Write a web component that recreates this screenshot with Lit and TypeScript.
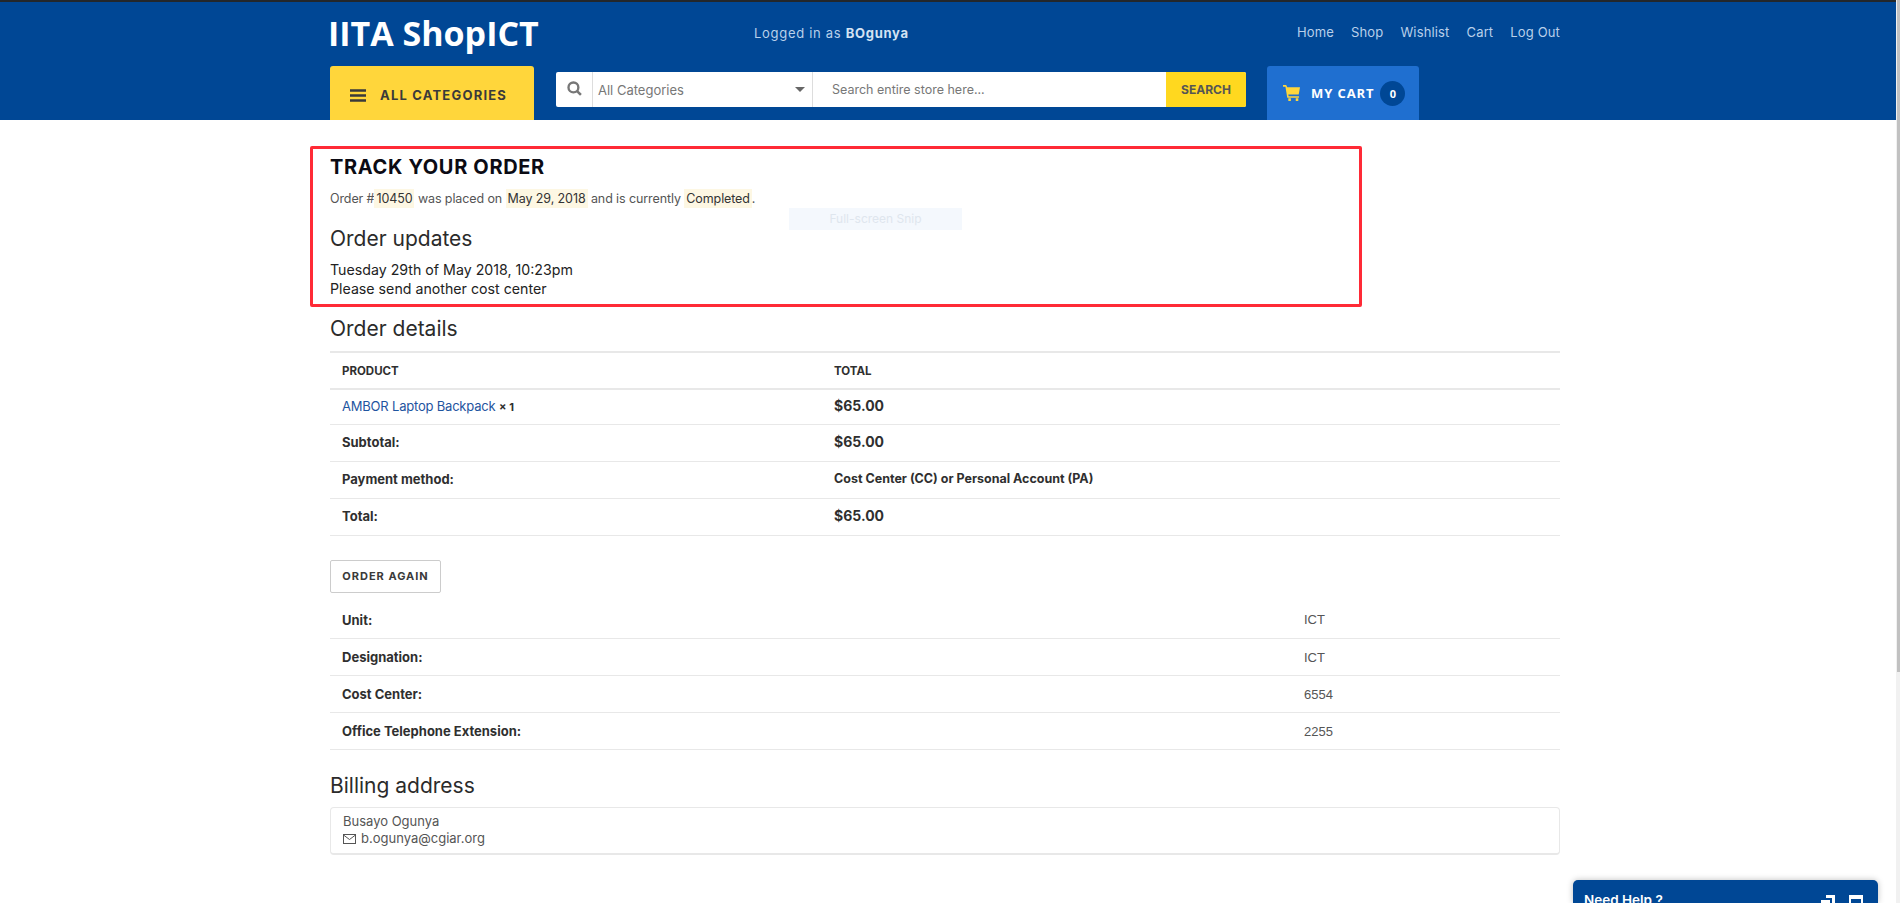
import { LitElement, css, html } from 'lit';
import { customElement } from 'lit/decorators.js';

const orderRows = [
  { label: 'Subtotal:', value: '$65.00', price: true },
  { label: 'Payment method:', value: 'Cost Center (CC) or Personal Account (PA)', price: false },
  { label: 'Total:', value: '$65.00', price: true },
];

const metaRows = [
  { label: 'Unit:', value: 'ICT' },
  { label: 'Designation:', value: 'ICT' },
  { label: 'Cost Center:', value: '6554' },
  { label: 'Office Telephone Extension:', value: '2255' },
];

@customElement('app-root')
export class AppRoot extends LitElement {
  static override styles = css`
    :host {
      display: block;
      position: relative;
      height: 903px;
      overflow: hidden;
      background: #fff;
      font-family: 'Inter', 'Liberation Sans', sans-serif;
      color: #333;
    }
    .scroll {
      position: absolute;
      top: 0;
      right: 0;
      bottom: 0;
      width: 4px;
      background: #f1f1f1;
    }
    .scroll::before {
      content: '';
      display: block;
      height: 672px;
      margin-left: 1px;
      background: #c1c1c1;
    }
    header {
      background: #004795;
      border-top: 2px solid #23272b;
      box-sizing: border-box;
      height: 120px;
    }
    .wrap {
      width: 1230px;
      margin-left: 330px;
    }
    .top {
      display: flex;
      align-items: center;
      height: 64px;
    }
    .logo {
      margin: -2px 0 0 -2px;
      font-family: 'Open Sans', sans-serif;
      font-weight: 700;
      font-size: 34px;
      color: #fff;
      width: 426px;
      line-height: 60px;
    }
    .logged {
      margin-top: -2px;
      font-size: 13px;
      letter-spacing: 0.7px;
      color: #b9d0ea;
    }
    .logged b {
      font-weight: 700;
      color: #d4e3f3;
    }
    .links {
      margin: -5px 0 0 auto;
      display: flex;
      gap: 17px;
      font-size: 13px;
      letter-spacing: 0.15px;
      color: #b9d0ea;
    }
    .bottom {
      display: flex;
      align-items: flex-start;
    }
    .cats {
      width: 204px;
      height: 54px;
      display: flex;
      align-items: center;
      gap: 14px;
      box-sizing: border-box;
      padding: 4px 0 0 20px;
      background: #ffd63b;
      border-radius: 3px 3px 0 0;
      color: #3a3a3a;
      font-size: 13px;
      font-weight: 700;
      letter-spacing: 1.2px;
    }
    .search {
      margin: 6px 0 0 22px;
      width: 690px;
      height: 35px;
      display: flex;
      background: #fff;
      border-radius: 2px;
      font-size: 13px;
      color: #777;
    }
    .search .mag {
      width: 37px;
      display: flex;
      align-items: center;
      justify-content: center;
      border-right: 1px solid #ddd;
      box-sizing: border-box;
      padding-bottom: 3px;
    }
    .search .sel {
      width: 220px;
      display: flex;
      align-items: center;
      justify-content: space-between;
      padding: 0 7px 0 5px;
      box-sizing: border-box;
      border-right: 1px solid #ddd;
    }
    .caret {
      width: 0;
      height: 0;
      border-left: 5px solid transparent;
      border-right: 5px solid transparent;
      border-top: 5px solid #666;
    }
    .search .input {
      flex: 1;
      display: flex;
      align-items: center;
      padding-left: 19px;
      font-size: 12.5px;
    }
    .search .btn {
      width: 80px;
      display: flex;
      align-items: center;
      justify-content: center;
      background: #ffd81f;
      border-radius: 0 2px 2px 0;
      color: #555;
      font-size: 12px;
      font-weight: 700;
    }
    .cart {
      margin-left: 21px;
      width: 152px;
      height: 54px;
      box-sizing: border-box;
      padding-left: 16px;
      display: flex;
      align-items: center;
      background: #1f6fd0;
      border-radius: 3px 3px 0 0;
      color: #fff;
      font-family: 'Open Sans', sans-serif;
      font-size: 13px;
      font-weight: 700;
      letter-spacing: 0.9px;
    }
    .cart svg {
      margin-right: 11px;
    }
    .badge {
      margin-left: 6px;
      width: 25px;
      height: 25px;
      border-radius: 50%;
      background: #004795;
      display: flex;
      align-items: center;
      justify-content: center;
      font-size: 11px;
      letter-spacing: 0;
    }
    main {
      padding-top: 34px;
    }
    h1 {
      margin: 0;
      font-size: 20px;
      line-height: 26px;
      font-weight: 700;
      letter-spacing: 0.65px;
      color: #0b0b14;
    }
    .status {
      margin: 7px 0 0;
      font-size: 12.5px;
      line-height: 24px;
      letter-spacing: -0.1px;
      color: #555;
    }
    mark {
      background: #fdf7e3;
      color: #333;
      padding: 2px 2px;
    }
    h2 {
      margin: 0;
      font-size: 21px;
      line-height: 28px;
      font-weight: 400;
      color: #2b2b2b;
    }
    .status + h2 {
      margin-top: 14px;
    }
    .update {
      margin: 7px 0 0;
      font-size: 14.2px;
      line-height: 19px;
      color: #222;
    }
    .details {
      margin-top: 17px;
    }
    table {
      width: 100%;
      border-collapse: collapse;
      table-layout: fixed;
      font-size: 13px;
    }
    .order {
      margin-top: 8px;
      border-top: 2px solid #e8e8e8;
    }
    td,
    th {
      padding: 0 12px;
      text-align: left;
      border-bottom: 1px solid #e8e8e8;
      height: 37px;
      box-sizing: border-box;
      color: #2f2f2f;
    }
    th {
      height: 37px;
      border-bottom-width: 2px;
      font-size: 11.5px;
      font-weight: 700;
    }
    .order tbody td {
      padding-bottom: 2px;
    }
    .order tbody tr:first-child td {
      height: 35px;
    }
    .order td:first-child,
    .order th:first-child {
      width: 492px;
    }
    .label {
      font-weight: 700;
    }
    .price {
      font-size: 14px;
      font-weight: 700;
    }
    .strong {
      font-size: 12.5px;
      font-weight: 700;
    }
    a {
      color: #1f55a0;
      text-decoration: none;
      letter-spacing: -0.2px;
    }
    .qty {
      font-size: 11px;
      font-weight: 700;
    }
    .again {
      display: block;
      margin: 24px 0 0;
      width: 111px;
      height: 33px;
      padding: 0;
      background: #fff;
      border: 1px solid #ccc;
      border-radius: 2px;
      font: 700 11px 'Inter', sans-serif;
      letter-spacing: 1px;
      color: #3a3a3a;
      white-space: nowrap;
    }
    .meta {
      margin-top: 9px;
    }
    .meta td:last-child {
      width: 256px;
      padding-left: 0;
      font-family: 'Liberation Sans', sans-serif;
      color: #555;
      font-size: 13px;
    }
    .billing {
      margin-top: 22px;
    }
    address {
      margin-top: 7px;
      padding: 5px 12px;
      height: 48px;
      box-sizing: border-box;
      border: 1px solid #e8e8e8;
      border-bottom-width: 2px;
      border-radius: 4px;
      font-style: normal;
      font-size: 13px;
      line-height: 17px;
      color: #555;
    }
    .mail {
      display: flex;
      align-items: center;
      gap: 5px;
    }
    .frame {
      position: absolute;
      left: 310px;
      top: 146px;
      width: 1052px;
      height: 161px;
      box-sizing: border-box;
      border: 3px solid #ff2a36;
      border-radius: 2px;
      pointer-events: none;
    }
    .snip {
      position: absolute;
      left: 789px;
      top: 208px;
      width: 173px;
      height: 22px;
      background: #f4f8fd;
      color: #dfe6ee;
      font-size: 12px;
      line-height: 22px;
      text-align: center;
    }
    .help {
      position: absolute;
      left: 1573px;
      top: 880px;
      width: 305px;
      height: 23px;
      overflow: hidden;
      box-sizing: border-box;
      padding: 12px 15px 0 11px;
      display: flex;
      justify-content: space-between;
      background: #004795;
      border-radius: 5px 5px 0 0;
      box-shadow: 0 0 6px rgba(0, 0, 0, 0.25);
      color: #fff;
      font-size: 13.5px;
      line-height: 17px;
      font-weight: 600;
    }
    .help div {
      display: flex;
      gap: 14px;
      margin-top: 3px;
    }
  `;

  override render() {
    return html`
      <header>
        <div class="wrap">
          <div class="top">
            <div class="logo">IITA ShopICT</div>
            <div class="logged">Logged in as <b>BOgunya</b></div>
            <nav class="links">
              <span>Home</span><span>Shop</span><span>Wishlist</span
              ><span>Cart</span><span>Log Out</span>
            </nav>
          </div>
          <div class="bottom">
            <div class="cats">
              <svg width="16" height="13" viewBox="0 0 16 13">
                <path d="M0 1.5h16M0 6.5h16M0 11.5h16" stroke="#3a3a3a" stroke-width="2.6" />
              </svg>
              ALL CATEGORIES
            </div>
            <div class="search">
              <div class="mag">
                <svg width="15" height="15" viewBox="0 0 14 14" fill="none">
                  <circle cx="6" cy="6" r="4.6" stroke="#777" stroke-width="2.2" />
                  <path d="M9.4 9.4 13 13" stroke="#777" stroke-width="2.4" />
                </svg>
              </div>
              <div class="sel">All Categories<span class="caret"></span></div>
              <div class="input">Search entire store here...</div>
              <div class="btn">SEARCH</div>
            </div>
            <div class="cart">
              <svg width="17" height="16" viewBox="0 0 16 15">
                <path
                  d="M0 0h3l1 2h12l-1.200 7H5l.3 1.600H15V12H4L2.300 1.500H0zM5 12.500h2.400V15H5zM12 12.500h2.400V15H12z"
                  fill="#ffd63b"
                />
              </svg>
              MY CART
              <span class="badge">0</span>
            </div>
          </div>
        </div>
      </header>
      <main class="wrap">
        <h1>TRACK YOUR ORDER</h1>
        <p class="status">
          Order #<mark>10450</mark> was placed on <mark>May 29, 2018</mark> and is currently
          <mark>Completed</mark>.
        </p>
        <h2>Order updates</h2>
        <p class="update">Tuesday 29th of May 2018, 10:23pm<br />Please send another cost center</p>
        <section class="details">
          <h2>Order details</h2>
          <table class="order">
            <thead>
              <tr><th>PRODUCT</th><th>TOTAL</th></tr>
            </thead>
            <tbody>
              <tr>
                <td><a>AMBOR Laptop Backpack</a> <span class="qty">× 1</span></td>
                <td class="price">$65.00</td>
              </tr>
              ${orderRows.map(
                (r) => html`
                  <tr>
                    <td class="label">${r.label}</td>
                    <td class=${r.price ? 'price' : 'strong'}>${r.value}</td>
                  </tr>
                `,
              )}
            </tbody>
          </table>
        </section>
        <button class="again">ORDER AGAIN</button>
        <table class="meta">
          ${metaRows.map(
            (r) => html`
              <tr>
                <td class="label">${r.label}</td>
                <td>${r.value}</td>
              </tr>
            `,
          )}
        </table>
        <section class="billing">
          <h2>Billing address</h2>
          <address>
            Busayo Ogunya
            <div class="mail">
              <svg width="13" height="10" viewBox="0 0 13 10" fill="none" stroke="#555">
                <rect x=".5" y=".5" width="12" height="9" />
                <path d="m.5 1 6 4.500 6-4.500" />
              </svg>
              b.ogunya@cgiar.org
            </div>
          </address>
        </section>
      </main>
      <div class="frame"></div>
      <div class="snip">Full-screen Snip</div>
      <aside class="help">
        Need Help ?
        <div>
          <svg width="14" height="14" viewBox="0 0 14 14" fill="#fff">
            <path d="M5 0h9v8h-3V3H5zM0 5h9v9H0z" />
          </svg>
          <svg width="14" height="14" viewBox="0 0 14 14" fill="none" stroke="#fff">
            <path d="M1 2.500h12" stroke-width="3" />
            <rect x="1" y="1" width="12" height="12" stroke-width="2" />
          </svg>
        </div>
      </aside>
      <div class="scroll"></div>
    `;
  }
}

declare global {
  interface HTMLElementTagNameMap {
    'app-root': AppRoot;
  }
}
